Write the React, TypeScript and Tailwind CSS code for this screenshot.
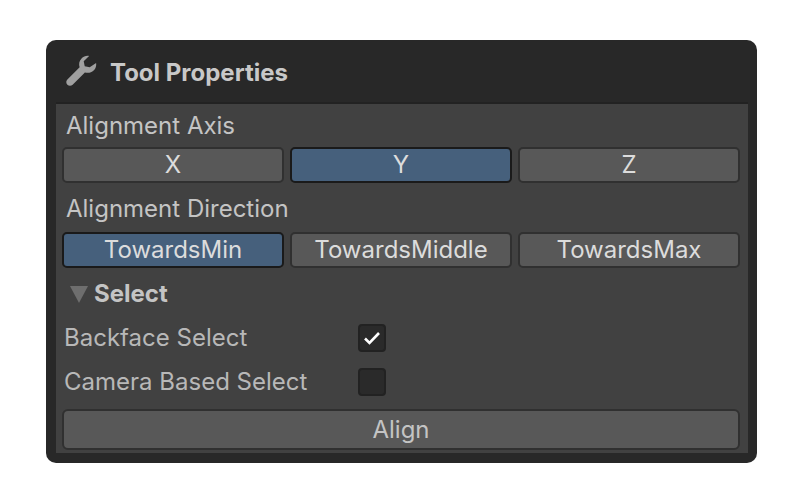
import React from "react";

const btn = "flex-1 h-[36px] rounded-[5px] border-2 flex items-center justify-center text-[24px] leading-none";
const off = "bg-[#585858] border-[#303030] text-[#dcdcdc]";
const on = "bg-[#46607c] border-[#1a1a1a] text-[#dcdcdc]";

function Seg({ items, active }: { items: string[]; active: number }) {
  return (
    <div className="flex gap-[6px] ml-[6px] mr-[8px]">
      {items.map((t, i) => (
        <div key={t} className={`${btn} ${i === active ? on : off}`}>{t}</div>
      ))}
    </div>
  );
}

function Row({ label, checked }: { label: string; checked?: boolean }) {
  return (
    <div className="flex items-center h-[44px] pl-[8px]">
      <div className="w-[294px] text-[24px] leading-none text-[#b8b8b8]">{label}</div>
      <div className="w-[28px] h-[28px] rounded-[4px] bg-[#2a2a2a] border-2 border-[#222222] flex items-center justify-center">
        {checked && (
          <svg width="18" height="14" viewBox="0 0 18 14">
            <path d="M2 7.500 L6.500 12 L16 2" fill="none" stroke="#ffffff" strokeWidth="2.600" />
          </svg>
        )}
      </div>
    </div>
  );
}

export default function App() {
  return (
    <div className="w-[800px] h-[500px] bg-white pt-[40px] pl-[46px]" style={{ fontFamily: "Inter, sans-serif" }}>
      <div className="w-[711px] h-[423px] rounded-[10px] bg-[#282828] flex flex-col pl-[10px] pr-[9px] pb-[10px]">
        <div className="h-[62px] flex items-center gap-[12px] pl-[8px] pt-[4px] shrink-0">
          <svg width="35" height="35" viewBox="0 0 24 24" className="-ml-[1px] -mt-[4px]">
            <path fill="#a0a0a0" d="M22.700 6.100c.3 1.900-.2 3.800-1.700 5.200-1.600 1.600-3.900 2-6 1.300L6.600 21c-1 1-2.600 1-3.600 0s-1-2.600 0-3.600l8.400-8.400c-.7-2.100-.3-4.400 1.300-6 1.400-1.500 3.300-2 5.200-1.700l-3.700 3.700.7 3.400 3.400.7z" />
          </svg>
          <span className="text-[24px] font-bold text-[#c8c8c8] leading-none">Tool Properties</span>
        </div>
        <div className="flex-1 bg-[#414141] border-t-2 border-[#222222] flex flex-col">
          <div className="h-[43px] flex items-center pl-[10px] text-[24px] leading-none text-[#c4c4c4]">Alignment Axis</div>
          <Seg items={["X", "Y", "Z"]} active={1} />
          <div className="h-[49px] flex items-center pl-[10px] pt-[3px] text-[24px] leading-none text-[#c4c4c4]">Alignment Direction</div>
          <Seg items={["TowardsMin", "TowardsMiddle", "TowardsMax"]} active={0} />
          <div className="h-[48px] flex items-center gap-[6px] pl-[14px] pt-[4px]">
            <svg width="18" height="17" viewBox="0 0 18 17"><path d="M0 0 H18 L9 17 Z" fill="#6e6e6e" /></svg>
            <span className="text-[24px] font-bold leading-none text-[#c4c4c4]">Select</span>
          </div>
          <Row label="Backface Select" checked />
          <Row label="Camera Based Select" />
          <div className="ml-[6px] mr-[8px] mt-[5px] h-[41px] rounded-[6px] border-2 border-[#303030] bg-[#585858] text-[#c4c4c4] text-[24px] leading-none flex items-center justify-center">Align</div>
        </div>
      </div>
    </div>
  );
}
